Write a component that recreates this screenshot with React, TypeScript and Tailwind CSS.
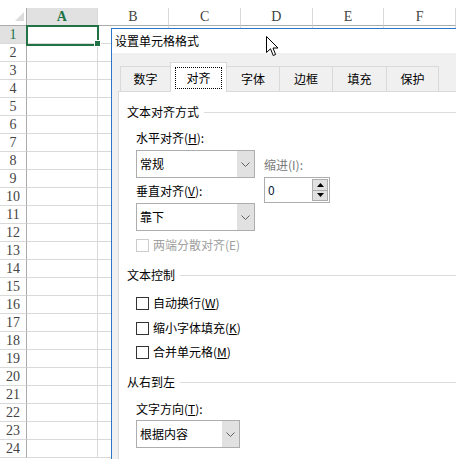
const colLetters = ["A", "B", "C", "D", "E", "F"];
const colClasses = ["w-[71px]", "w-[72px]", "w-[72px]", "w-[72px]", "w-[72px]", "w-[72px]"];
const rows = Array.from({ length: 24 }, (_, i) => i + 1);

function Chevron() {
  return (
    <svg width="9" height="5" viewBox="0 0 9 5">
      <path d="M0.5 0.5 L4.5 4.5 L8.5 0.5" fill="none" stroke="#606060" strokeWidth="1" />
    </svg>
  );
}

function Combo({ text, w }: { text: string; w: string }) {
  return (
    <div className={`flex h-[28px] ${w} border border-[#adadad] bg-white`}>
      <div className="flex flex-1 items-center pl-[3px]">{text}</div>
      <div className="flex w-[17px] items-center justify-center bg-[#e1e1e1]">
        <Chevron />
      </div>
    </div>
  );
}

function Check({ children, disabled }: { children: React.ReactNode; disabled?: boolean }) {
  return (
    <div className="flex h-[16px] items-center">
      <div
        className={`h-[13px] w-[13px] border bg-white ${disabled ? "border-[#cccccc]" : "border-[#333333]"}`}
      />
      <span className={`ml-[4px] ${disabled ? "text-[#a0a0a0]" : ""}`}>{children}</span>
    </div>
  );
}

function GroupLabel({ text }: { text: string }) {
  return (
    <div className="flex h-[16px] items-center">
      <span>{text}</span>
      <div className="ml-[5px] h-px flex-1 bg-[#dcdcdc]" />
    </div>
  );
}

const tabs = [
  { label: "数字", cls: "w-[50px] border-l" },
  { label: "对齐", cls: "w-[57px]", active: true },
  { label: "字体", cls: "w-[53px] border-r" },
  { label: "边框", cls: "w-[53px] border-r" },
  { label: "填充", cls: "w-[54px] border-r" },
  { label: "保护", cls: "w-[52px] border-r" },
];

export default function App() {
  return (
    <div className="relative h-[459px] w-[456px] overflow-hidden bg-white text-[12px] text-black font-['Noto_Sans_CJK_SC',sans-serif]">
      {/* sheet */}
      <div className="h-[8px]" />
      <div className="flex h-[18px] font-['Liberation_Serif',serif] text-[14px] text-[#444444]">
        <div className="relative w-[27px] border-r border-b border-[#ababab]">
          <svg className="absolute left-[15px] top-[4px]" width="9" height="9" viewBox="0 0 9 9">
            <path d="M9 0 L9 9 L0 9 Z" fill="#dcdcdc" />
          </svg>
        </div>
        {colLetters.map((c, i) => (
          <div
            key={c}
            className={`${colClasses[i]} flex items-center justify-center border-r border-b border-r-[#d9d9d9] border-b-[#ababab] ${
              i === 0 ? "bg-[#e1e1e1] font-bold text-[#217346]" : ""
            }`}
          >
            {c}
          </div>
        ))}
      </div>
      {rows.map((r) => (
        <div key={r} className="flex h-[18px]">
          <div
            className={`flex w-[27px] items-center justify-center border-r border-b border-r-[#ababab] border-b-[#d9d9d9] font-['Liberation_Serif',serif] text-[14px] ${
              r === 1 ? "bg-[#e1e1e1] text-[#217346]" : "text-[#444444]"
            }`}
          >
            {r}
          </div>
          {colClasses.map((w, i) => (
            <div key={i} className={`${w} border-r border-b border-[#d9d9d9]`} />
          ))}
        </div>
      ))}

      {/* selected cell */}
      <div className="absolute left-[26px] top-[25px] h-[21px] w-[73px] border-2 border-[#217346]" />
      <div className="absolute left-[94px] top-[40px] h-[7px] w-[7px] border border-white bg-[#217346]" />

      {/* dialog */}
      <div className="absolute left-[111px] top-[28px] flex h-[460px] w-[360px] flex-col border border-[#2b79c6] bg-[#f0f0f0]">
        <div className="flex h-[24px] items-center bg-white pl-[3px]">设置单元格格式</div>
        <div className="flex flex-1 flex-col pl-[6px] pt-[9px]">
          <div className="ml-[2px] flex h-[29px] items-end">
            {tabs.map((t) =>
              t.active ? (
                <div
                  key={t.label}
                  className={`${t.cls} relative z-10 -mb-px flex h-[30px] items-start justify-center border border-b-0 border-[#d9d9d9] bg-white pt-[4px]`}
                >
                  <div className="flex h-[22px] w-[47px] items-center justify-center border border-dotted border-black">
                    {t.label}
                  </div>
                </div>
              ) : (
                <div
                  key={t.label}
                  className={`${t.cls} flex h-[25px] items-center justify-center border-t border-[#d9d9d9]`}
                >
                  {t.label}
                </div>
              )
            )}
          </div>
          <div className="flex-1 border border-[#d9d9d9] bg-white pl-[8px] pt-[12px]">
            <GroupLabel text="文本对齐方式" />
            <div className="mt-[10px] flex pl-[9px]">
              <div className="flex flex-col">
                <div className="flex h-[16px] items-center">
                  水平对齐(<span className="underline">H</span>):
                </div>
                <div className="mt-[4px]">
                  <Combo text="常规" w="w-[119px]" />
                </div>
                <div className="mt-[5px] flex h-[16px] items-center">
                  垂直对齐(<span className="underline">V</span>):
                </div>
                <div className="mt-[4px]">
                  <Combo text="靠下" w="w-[119px]" />
                </div>
              </div>
              <div className="ml-[9px] mt-[27px] flex flex-col">
                <div className="flex h-[16px] items-center text-[#7a7a7a]">缩进(I):</div>
                <div className="mt-[4px] flex h-[26px] w-[66px] border border-[#adadad] bg-white">
                  <div className="flex flex-1 items-center pl-[3px] text-[#0a1a3a]">0</div>
                  <div className="my-px mr-px flex w-[16px] flex-col">
                    <div className="flex flex-1 items-center justify-center border border-[#adadad] bg-[#e1e1e1]">
                      <svg width="7" height="4" viewBox="0 0 7 4">
                        <path d="M0 4 L3.5 0 L7 4 Z" fill="#000" />
                      </svg>
                    </div>
                    <div className="flex flex-1 items-center justify-center border border-t-0 border-[#adadad] bg-[#e1e1e1]">
                      <svg width="7" height="4" viewBox="0 0 7 4">
                        <path d="M0 0 L7 0 L3.5 4 Z" fill="#000" />
                      </svg>
                    </div>
                  </div>
                </div>
              </div>
            </div>
            <div className="mt-[6px] pl-[9px]">
              <Check disabled>两端分散对齐(E)</Check>
            </div>

            <div className="mt-[14px]">
              <GroupLabel text="文本控制" />
            </div>
            <div className="mt-[12px] pl-[9px]">
              <Check>
                自动换行(<span className="underline">W</span>)
              </Check>
            </div>
            <div className="mt-[9px] pl-[9px]">
              <Check>
                缩小字体填充(<span className="underline">K</span>)
              </Check>
            </div>
            <div className="mt-[8px] pl-[9px]">
              <Check>
                合并单元格(<span className="underline">M</span>)
              </Check>
            </div>

            <div className="mt-[14px]">
              <GroupLabel text="从右到左" />
            </div>
            <div className="mt-[11px] flex h-[16px] items-center pl-[9px]">
              文字方向(<span className="underline">T</span>):
            </div>
            <div className="mt-[3px] pl-[9px]">
              <Combo text="根据内容" w="w-[104px]" />
            </div>
          </div>
        </div>
      </div>

      {/* mouse cursor */}
      <svg className="absolute left-[266px] top-[36px]" width="13" height="21" viewBox="0 0 13 21">
        <path
          d="M0.5 0.5 L0.5 16.5 L4.5 12.8 L7.2 19.5 L9.6 18.5 L7 12 L12 12 Z"
          fill="#ffffff"
          stroke="#000000"
          strokeWidth="1"
          strokeLinejoin="round"
        />
      </svg>
    </div>
  );
}
